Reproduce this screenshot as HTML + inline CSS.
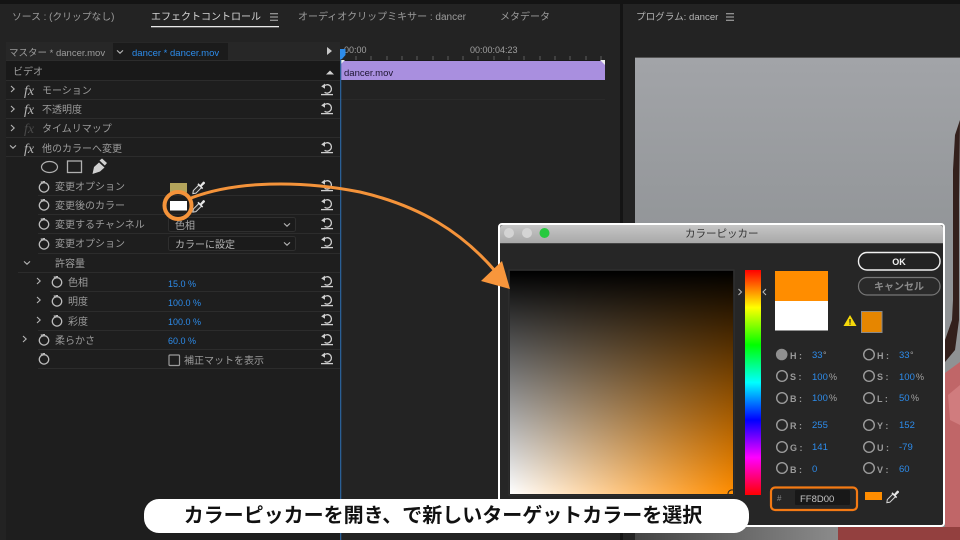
<!DOCTYPE html>
<html><head><meta charset="utf-8">
<style>
html,body{margin:0;padding:0;background:#141414;width:960px;height:540px;overflow:hidden}
svg{display:block}
text{font-family:"Liberation Sans","Noto Sans CJK JP",sans-serif;font-size:10px;fill:#a3a3a3}
.t{fill:#9c9c9c}
.b{fill:#2d8ceb}
.l{font-size:10px;fill:#9a9a9a;font-weight:bold}
.fx{font-family:"Liberation Serif",serif;font-style:italic;font-size:14px;fill:#b5b5b5}
</style></head><body>
<svg width="960" height="540" viewBox="0 0 960 540" xmlns="http://www.w3.org/2000/svg">
<defs>
<linearGradient id="gh" x1="0" x2="1" y1="0" y2="0"><stop offset="0" stop-color="#fff"/><stop offset="1" stop-color="#ff8d00"/></linearGradient>
<linearGradient id="gv" x1="0" x2="0" y1="0" y2="1"><stop offset="0" stop-color="#000"/><stop offset="1" stop-color="#000" stop-opacity="0"/></linearGradient>
<linearGradient id="hue" x1="0" x2="0" y1="0" y2="1">
<stop offset="0" stop-color="#f00"/><stop offset=".167" stop-color="#ff0"/><stop offset=".333" stop-color="#0f0"/><stop offset=".5" stop-color="#0ff"/><stop offset=".667" stop-color="#00f"/><stop offset=".833" stop-color="#f0f"/><stop offset="1" stop-color="#f00"/></linearGradient>
<linearGradient id="tb" x1="0" x2="0" y1="0" y2="1"><stop offset="0" stop-color="#c6c6c6"/><stop offset="1" stop-color="#a8a8a8"/></linearGradient>
<linearGradient id="vid" x1="0" x2="0" y1="0" y2="1"><stop offset="0" stop-color="#a2a4a8"/><stop offset=".35" stop-color="#939699"/><stop offset="1" stop-color="#8a8d8e"/></linearGradient>
<linearGradient id="vb" x1="0" x2="1" y1="0" y2="0"><stop offset="0" stop-color="#444"/><stop offset="1" stop-color="#8c8c8c"/></linearGradient>
<symbol id="r" viewBox="0 0 14 14" width="14" height="14" overflow="visible">
<path d="M4 3.2 A4.2 4.2 0 1 1 4.6 9.2" fill="none" stroke="#cfcfcf" stroke-width="1.3"/>
<path d="M1.2 3.4 L5 .6 L5 5.8 Z" fill="#cfcfcf"/>
<path d="M1 11.6 H13" stroke="#cfcfcf" stroke-width="1.3"/>
</symbol>
<symbol id="s" viewBox="0 0 12 12" width="12" height="12" overflow="visible">
<circle cx="6" cy="6.400" r="4.700" fill="none" stroke="#bdbdbd" stroke-width="1.300"/>
<path d="M2.800 .6 L5 2.400 M4.400 .6 H7" stroke="#bdbdbd" stroke-width="1.100" fill="none"/>
</symbol>
<symbol id="c" viewBox="0 0 8 8" width="8" height="8" overflow="visible"><path d="M2 1 L5.200 4 L2 7" fill="none" stroke="#b5b5b5" stroke-width="1.100"/></symbol>
<symbol id="d" viewBox="0 0 8 8" width="8" height="8" overflow="visible"><path d="M1 2.400 L4 5.200 L7 2.400" fill="none" stroke="#b5b5b5" stroke-width="1.100"/></symbol>
<symbol id="e" viewBox="0 0 16 16" width="14" height="14" overflow="visible">
<path d="M1 15 L1.500 11.500 L8 5 L11 8 L4.500 14.500 Z" fill="#2a2a2a" stroke="#d4d4d4" stroke-width="1.200"/>
<path d="M6.800 3.800 L12.200 9.200" stroke="#e6e6e6" stroke-width="1.700" fill="none"/>
<path d="M9 5.500 L12.500 1.500 C13.600 .5 15.600 2.400 14.600 3.600 L10.800 7.200 Z" fill="#e6e6e6"/>
</symbol>
<symbol id="rad" viewBox="0 0 12 12" width="12" height="12" overflow="visible"><circle cx="6" cy="6" r="5.300" fill="none" stroke="#9c9c9c" stroke-width="1.400"/></symbol>
<symbol id="ham" viewBox="0 0 8 8" width="8" height="8" overflow="visible"><path d="M0 .8 H8 M0 4 H8 M0 7.200 H8" stroke="#b5b5b5" stroke-width="1"/></symbol>
</defs>

<!-- base panels -->
<rect width="960" height="540" fill="#141414"/>
<rect x="0" y="4" width="620" height="536" fill="#232323"/>
<rect x="623" y="4" width="337" height="536" fill="#232323"/>

<!-- tabs -->
<text x="12" y="20" class="t" style="font-size:9.800px">ソース : (クリップなし)</text>
<text x="151" y="20" style="fill:#d6d6d6">エフェクトコントロール</text>
<use href="#ham" x="270" y="13"/>
<rect x="151" y="26" width="128" height="1.300" fill="#e8e8e8"/>
<text x="298" y="20" class="t">オーディオクリップミキサー : dancer</text>
<text x="500" y="20" class="t">メタデータ</text>
<text x="636" y="20" style="fill:#b4b4b4;font-size:9.600px">プログラム: dancer</text>
<use href="#ham" x="726" y="13"/>

<!-- effect control left rows -->
<rect x="6" y="42" width="334" height="498" fill="#1e1e1e"/>
<rect x="6" y="42" width="334" height="18" fill="#272727"/>
<rect x="113" y="43" width="115" height="17" fill="#1b1b1b"/>
<rect x="6" y="61" width="334" height="19" fill="#191919"/>
<g fill="#2c2c2c">
<rect x="6" y="60" width="334" height="1"/><rect x="6" y="80" width="334" height="1"/><rect x="6" y="99" width="334" height="1"/>
<rect x="6" y="118" width="334" height="1"/><rect x="6" y="137" width="334" height="1"/><rect x="6" y="156" width="334" height="1"/>
<rect x="38" y="195" width="302" height="1"/><rect x="38" y="214" width="302" height="1"/><rect x="38" y="233" width="302" height="1"/>
<rect x="38" y="253" width="302" height="1"/><rect x="18" y="272" width="322" height="1"/><rect x="50" y="291" width="290" height="1"/>
<rect x="50" y="311" width="290" height="1"/><rect x="38" y="330" width="302" height="1"/><rect x="38" y="349" width="302" height="1"/><rect x="38" y="368" width="302" height="1"/>
</g>
<text x="9" y="56" class="t" style="font-size:9.500px">マスター * dancer.mov</text>
<use href="#d" x="116" y="48"/>
<text x="132" y="56" class="b" style="font-size:9.500px">dancer * dancer.mov</text>
<path d="M327 47 L332 51 L327 55 Z" fill="#c8c8c8"/>
<text x="13" y="75" class="t">ビデオ</text>
<path d="M326 74.500 L330 70.500 L334 74.500 Z" fill="#d0d0d0"/>

<use href="#c" x="9" y="85"/><use href="#c" x="9" y="105"/><use href="#c" x="9" y="124"/><use href="#d" x="9" y="143"/>
<text x="24" y="95" class="fx">fx</text>
<text x="24" y="114" class="fx">fx</text>
<text x="24" y="133" class="fx" style="fill:#4a4a4a">fx</text>
<text x="24" y="153" class="fx">fx</text>
<text x="42" y="94" class="t">モーション</text>
<text x="42" y="113" class="t">不透明度</text>
<text x="42" y="132" class="t">タイムリマップ</text>
<text x="42" y="152" class="t">他のカラーへ変更</text>

<ellipse cx="49.500" cy="167" rx="8" ry="5.500" fill="none" stroke="#b0b0b0" stroke-width="1.200"/>
<rect x="67.500" y="161" width="14" height="11.500" fill="none" stroke="#b0b0b0" stroke-width="1.300"/>
<path d="M92.500 174 L94 167 L99 162.500 L104.500 167.500 L100 171.500 Z" fill="#d0d0d0"/>
<path d="M99.500 160.500 L102 158.500 L107 163 L104.800 165.500 Z" fill="#d0d0d0"/>

<g>
<use href="#s" x="38" y="181"/><use href="#s" x="38" y="199"/><use href="#s" x="38" y="218"/><use href="#s" x="38" y="238"/>
<use href="#s" x="51" y="276"/><use href="#s" x="51" y="295"/><use href="#s" x="51" y="315"/><use href="#s" x="38" y="334"/><use href="#s" x="38" y="353"/>
</g>
<text x="55" y="190" class="t">変更オプション</text>
<text x="55" y="209" class="t">変更後のカラー</text>
<text x="55" y="228" class="t">変更するチャンネル</text>
<text x="55" y="247" class="t">変更オプション</text>
<text x="55" y="267" class="t">許容量</text>
<text x="68" y="286" class="t">色相</text>
<text x="68" y="305" class="t">明度</text>
<text x="68" y="325" class="t">彩度</text>
<text x="55" y="344" class="t">柔らかさ</text>
<use href="#d" x="23" y="259"/>
<use href="#c" x="35" y="277"/><use href="#c" x="35" y="296"/><use href="#c" x="35" y="316"/><use href="#c" x="21" y="335"/>

<rect x="170" y="183" width="17" height="9.500" fill="#b3a45b"/>
<use href="#e" x="192" y="180.500"/>
<rect x="170" y="201" width="17" height="9.500" fill="#fff"/>
<use href="#e" x="192" y="199"/>

<rect x="168.500" y="217.500" width="127" height="14" rx="2" fill="#1b1b1b" stroke="#2f2f2f"/>
<text x="175" y="229" style="fill:#a8a8a8">色相</text>
<use href="#d" x="283" y="221"/>
<rect x="168.500" y="236.500" width="127" height="14" rx="2" fill="#1b1b1b" stroke="#2f2f2f"/>
<text x="175" y="248" style="fill:#b5b5b5">カラーに設定</text>
<use href="#d" x="283" y="240"/>

<text x="168" y="287" class="b" style="font-size:9px">15.0 %</text>
<text x="168" y="306" class="b" style="font-size:9px">100.0 %</text>
<text x="168" y="325" class="b" style="font-size:9px">100.0 %</text>
<text x="168" y="344" class="b" style="font-size:9px">60.0 %</text>
<rect x="169" y="355" width="10.500" height="10.500" rx="1" fill="none" stroke="#9a9a9a" stroke-width="1.200"/>
<text x="184" y="364" class="t">補正マットを表示</text>

<g>
<use href="#r" x="320" y="83"/><use href="#r" x="320" y="102"/><use href="#r" x="320" y="141"/><use href="#r" x="320" y="179"/>
<use href="#r" x="320" y="198"/><use href="#r" x="320" y="217"/><use href="#r" x="320" y="236"/>
<use href="#r" x="320" y="275"/><use href="#r" x="320" y="294"/><use href="#r" x="320" y="313"/><use href="#r" x="320" y="333"/><use href="#r" x="320" y="352"/>
</g>

<!-- timeline -->
<rect x="341" y="42" width="279" height="498" fill="#232323"/>
<text x="344" y="53" style="font-size:9px;fill:#a0a0a0">00:00</text>
<text x="470" y="53" style="font-size:9px;fill:#a0a0a0">00:00:04:23</text>
<path d="M356 56V60M371 56V60M387 56V60M402 56V60M417 56V60M433 56V60M448 56V60M463 56V60M478 56V60M494 56V60M509 56V60M524 56V60M540 56V60M555 56V60M570 56V60M586 56V60M601 56V60" stroke="#5c5c5c" stroke-width="1"/>
<rect x="341" y="60" width="264" height="1" fill="#1a1a1a"/>
<rect x="341" y="61" width="264" height="19" fill="#a98fdf"/>
<path d="M341 60 L345 60 L341 64 Z" fill="#eee"/>
<path d="M605 60 L600 60 L605 65 Z" fill="#eee"/>
<text x="344" y="76" style="fill:#1c1430;font-size:9.500px">dancer.mov</text>
<rect x="341" y="99" width="264" height="1" fill="#2a2a2a"/>
<rect x="340" y="49" width="1.300" height="491" fill="#2a5f95"/>
<path d="M340 49 H345.500 V55 L342 59 H340 Z" fill="#2d8ceb"/>

<!-- program monitor -->
<rect x="635" y="57" width="325" height="483" fill="url(#vid)"/>
<rect x="635" y="57" width="325" height="1" fill="#555"/>
<path d="M960 120 L955 135 L953 170 L953 300 L952 320 L945 340 L945 362 L955 350 L959 320 L959 200 Z" fill="#33201c"/>
<path d="M945 373 L960 362 V527 H945 Z" fill="#c06668"/>
<path d="M948 395 L960 385 V425 L950 420 Z" fill="#d07c7e"/>
<rect x="635" y="527" width="205" height="13" fill="url(#vb)"/>
<path d="M838 527 H960 V540 H838 Z" fill="#93403f"/>

<!-- color picker -->
<rect x="499" y="224" width="445" height="302" rx="3" fill="#262626" stroke="#fff" stroke-width="2"/>
<path d="M500 228 Q500 225 503 225 H940 Q943 225 943 228 V243 H500 Z" fill="url(#tb)"/>
<rect x="500" y="243" width="443" height="1" fill="#444"/>
<circle cx="509" cy="233" r="5" fill="#d4d4d4"/><circle cx="527" cy="233" r="5" fill="#d4d4d4"/><circle cx="544.500" cy="233" r="5" fill="#27c93f"/>
<text x="685" y="237" style="fill:#333;font-size:10.500px">カラーピッカー</text>

<rect x="509" y="270" width="225" height="225" fill="#1b1b1b" stroke="#333" stroke-width="1"/>
<rect x="510" y="271" width="223" height="223" fill="url(#gh)"/>
<rect x="510" y="271" width="223" height="223" fill="url(#gv)"/>
<path d="M728 494 A4 4 0 0 1 733 490" fill="none" stroke="#222" stroke-width="1"/>
<rect x="745" y="270" width="16" height="225" fill="url(#hue)"/>
<path d="M738.500 289 L741.500 292 L738.500 295" fill="none" stroke="#bbb" stroke-width="1"/>
<path d="M766 289 L763 292 L766 295" fill="none" stroke="#bbb" stroke-width="1"/>

<rect x="775" y="271" width="53" height="30" fill="#ff8d00"/>
<rect x="775" y="301" width="53" height="29.500" fill="#fff"/>

<rect x="858.500" y="252.500" width="81.500" height="17.500" rx="8.500" fill="#222" stroke="#f0f0f0" stroke-width="1.400"/>
<text x="899" y="265" text-anchor="middle" style="fill:#f0f0f0;font-size:9px;font-weight:bold">OK</text>
<rect x="858.500" y="277.500" width="81.500" height="17.500" rx="8.500" fill="#2a2a2a" stroke="#777" stroke-width="1.200"/>
<text x="899" y="290" text-anchor="middle" style="fill:#8a8a8a;font-size:10px;font-weight:bold">キャンセル</text>
<path d="M850 315 L856.500 326 H843.500 Z" fill="#f6d90a"/>
<rect x="849.400" y="319" width="1.200" height="3.800" fill="#222"/><rect x="849.400" y="323.500" width="1.200" height="1.200" fill="#222"/>
<rect x="861.500" y="311.500" width="20.500" height="21" fill="#e68600" stroke="#8a8a8a" stroke-width="1"/>

<circle cx="781.700" cy="354.500" r="5.800" fill="#8f8f8f"/>
<use href="#rad" x="776" y="370"/><use href="#rad" x="776" y="392"/><use href="#rad" x="776" y="419"/><use href="#rad" x="776" y="441"/><use href="#rad" x="776" y="462"/>
<use href="#rad" x="863" y="348.500"/><use href="#rad" x="863" y="370"/><use href="#rad" x="863" y="392"/><use href="#rad" x="863" y="419"/><use href="#rad" x="863" y="441"/><use href="#rad" x="863" y="462"/>

<text x="790" y="359" class="l" style="font-size:9px">H :</text><text x="790" y="380" class="l" style="font-size:9px">S :</text><text x="790" y="402" class="l" style="font-size:9px">B :</text>
<text x="790" y="429" class="l" style="font-size:9px">R :</text><text x="790" y="451" class="l" style="font-size:9px">G :</text><text x="790" y="473" class="l" style="font-size:9px">B :</text>
<text x="877" y="359" class="l" style="font-size:9px">H :</text><text x="877" y="380" class="l" style="font-size:9px">S :</text><text x="877" y="402" class="l" style="font-size:9px">L :</text>
<text x="877" y="429" class="l" style="font-size:9px">Y :</text><text x="877" y="451" class="l" style="font-size:9px">U :</text><text x="877" y="473" class="l" style="font-size:9px">V :</text>

<text x="812" y="358" class="b" style="font-size:9.500px">33</text><text x="823" y="358" style="font-size:9px">°</text>
<text x="812" y="380" class="b" style="font-size:9.500px">100</text><text x="829" y="380" style="font-size:9px">%</text>
<text x="812" y="401" class="b" style="font-size:9.500px">100</text><text x="829" y="401" style="font-size:9px">%</text>
<text x="812" y="428" class="b" style="font-size:9.500px">255</text>
<text x="812" y="450" class="b" style="font-size:9.500px">141</text>
<text x="812" y="472" class="b" style="font-size:9.500px">0</text>
<text x="899" y="358" class="b" style="font-size:9.500px">33</text><text x="910" y="358" style="font-size:9px">°</text>
<text x="899" y="380" class="b" style="font-size:9.500px">100</text><text x="916" y="380" style="font-size:9px">%</text>
<text x="899" y="401" class="b" style="font-size:9.500px">50</text><text x="911" y="401" style="font-size:9px">%</text>
<text x="899" y="428" class="b" style="font-size:9.500px">152</text>
<text x="899" y="450" class="b" style="font-size:9.500px">-79</text>
<text x="899" y="472" class="b" style="font-size:9.500px">60</text>

<rect x="771" y="487.500" width="86" height="22.500" rx="4" fill="#262626" stroke="#f47a14" stroke-width="2.200"/>
<text x="777" y="501" style="fill:#888;font-size:8px">#</text>
<rect x="795" y="490" width="55" height="15" rx="1" fill="#181818"/>
<text x="800" y="502" style="fill:#c4c4c4;font-size:9.500px">FF8D00</text>
<rect x="865" y="492" width="17" height="8" fill="#ff8d00"/>
<use href="#e" x="886" y="489.500"/>

<!-- arrow -->
<circle cx="178" cy="205.500" r="13.500" fill="none" stroke="#f4933a" stroke-width="4"/>
<path d="M191 198 C 235 181 300 180 360 192 C 420 206 462 232 496 272" fill="none" stroke="#f4933a" stroke-width="3"/>
<path d="M502 261 L481 281 L510 289 Z" fill="#f8963c"/>

<!-- caption -->
<rect x="144" y="499" width="605" height="34" rx="15" fill="#fff"/>
<text x="443" y="522" text-anchor="middle" style="fill:#111;font-size:20px;font-weight:bold">カラーピッカーを開き、で新しいターゲットカラーを選択</text>
</svg>
</body></html>
